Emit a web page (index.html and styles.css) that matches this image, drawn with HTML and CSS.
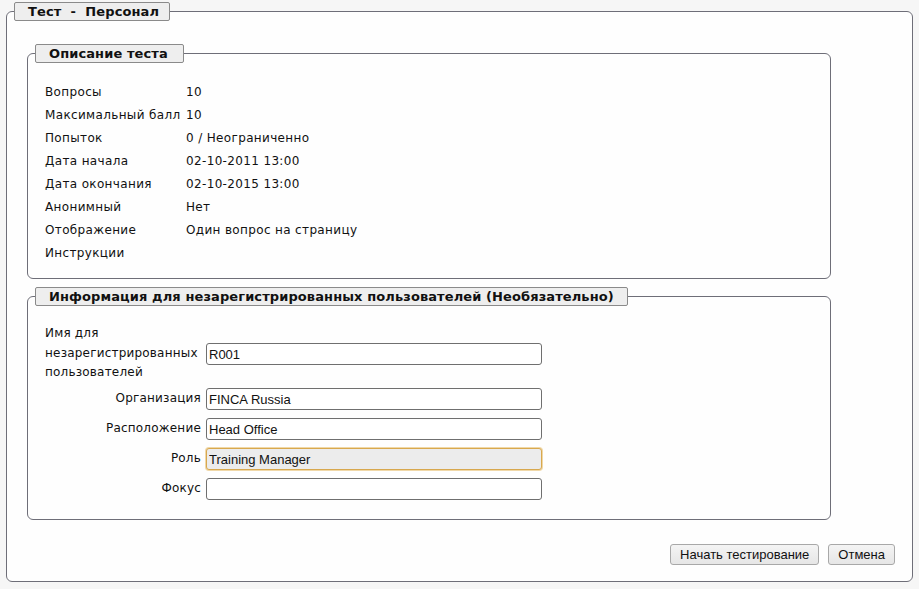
FILE: index.html
```html
<!DOCTYPE html>
<html lang="ru">
<head>
<meta charset="utf-8">
<title>Тест - Персонал</title>
<link rel="stylesheet" href="styles.css">
</head>
<body>
<fieldset class="outer">
  <legend class="legend legend-outer">Тест&nbsp; -&nbsp; Персонал</legend>
  <fieldset class="inner desc">
    <legend class="legend legend-inner">Описание теста</legend>
    <table class="info">
      <tr><td class="k">Вопросы</td><td>10</td></tr>
      <tr><td class="k">Максимальный балл</td><td>10</td></tr>
      <tr><td class="k">Попыток</td><td>0 / Неограниченно</td></tr>
      <tr><td class="k">Дата начала</td><td>02-10-2011 13:00</td></tr>
      <tr><td class="k">Дата окончания</td><td>02-10-2015 13:00</td></tr>
      <tr><td class="k">Анонимный</td><td>Нет</td></tr>
      <tr><td class="k">Отображение</td><td>Один вопрос на страницу</td></tr>
      <tr><td class="k">Инструкции</td><td></td></tr>
    </table>
  </fieldset>
  <fieldset class="inner anon">
    <legend class="legend legend-inner">Информация для незарегистрированных пользователей (Необязательно)</legend>
    <table class="form">
      <tr class="tall"><td class="lbl lbl-left">Имя для<br>незарегистрированных<br>пользователей</td><td><input class="field" type="text" value="R001"></td></tr>
      <tr><td class="lbl">Организация</td><td><input class="field" type="text" value="FINCA Russia"></td></tr>
      <tr><td class="lbl">Расположение</td><td><input class="field" type="text" value="Head Office"></td></tr>
      <tr><td class="lbl">Роль</td><td><input class="field active" type="text" value="Training Manager"></td></tr>
      <tr><td class="lbl">Фокус</td><td><input class="field" type="text" value=""></td></tr>
    </table>
  </fieldset>
  <div class="actions">
    <button class="btn" type="button">Начать тестирование</button>
    <button class="btn" type="button">Отмена</button>
  </div>
</fieldset>
</body>
</html>
```
FILE: styles.css
```css
html, body {
  margin: 0;
  padding: 0;
  background: #f6f6f6;
}
body {
  font-family: "DejaVu Sans", Verdana, sans-serif;
  font-size: 12px;
  letter-spacing: 0.35px;
  color: #111;
}
.outer {
  margin: 2px 0 0 6px;
  width: 907px;
  height: 580px;
  box-sizing: border-box;
  border: 1px solid #6e6e78;
  border-radius: 6px;
  background: #fefefe;
  padding: 0 17px 0 20px;
  display: flex;
  flex-direction: column;
}
.legend {
  background: #eeeeee;
  border: 1px solid #8a8a8a;
  border-radius: 2px;
  font-weight: bold;
  font-size: 13px;
  letter-spacing: 0.1px;
  height: 19px;
  line-height: 17px;
  box-sizing: border-box;
  padding: 0 13px 0 13px;
}
.legend-outer {
  margin-left: -13px;
  padding-right: 10px;
}
.legend-inner {
  margin-left: -10px;
}
.inner {
  width: 804px;
  box-sizing: border-box;
  border: 1px solid #6e6e78;
  border-radius: 6px;
  margin: 0;
  padding: 0 17px 0 17px;
}
.desc {
  margin-top: 23px;
  height: 235px;
}
.desc .legend-inner {
  padding-right: 15px;
}
.anon {
  margin-top: 8px;
  height: 233px;
}
.info {
  border-collapse: collapse;
  margin-top: 17px;
}
.info td {
  padding: 0;
  height: 23px;
  white-space: nowrap;
}
.info td.k {
  width: 141px;
}
.form {
  border-collapse: collapse;
  margin-top: 17px;
}
.form td {
  padding: 0;
  height: 30px;
}
.form tr.tall td {
  height: 61px;
}
.form td.lbl {
  text-align: right;
  line-height: 19.5px;
  width: 156px;
  padding-right: 5px;
  vertical-align: middle;
  letter-spacing: 0.2px;
}
.form td.lbl-left {
  text-align: left;
}
.field {
  display: block;
  width: 336px;
  height: 22px;
  box-sizing: border-box;
  border: 1px solid #6f6f6f;
  border-radius: 3px;
  background: #fff;
  font-family: "Liberation Sans", Arial, sans-serif;
  font-size: 13px;
  letter-spacing: 0;
  color: #111;
  padding: 1px 2px 0;
  margin: 0;
}
.field.active {
  background: #ececec;
  border-color: #d8a84e;
  box-shadow: 0 0 0 1px #f0d8a8;
}
.actions {
  margin-top: auto;
  margin-bottom: 16px;
  display: flex;
  justify-content: flex-end;
  gap: 9px;
}
.btn {
  font-family: "Liberation Sans", Arial, sans-serif;
  font-size: 13px;
  letter-spacing: 0;
  color: #111;
  height: 21px;
  padding: 0 9px;
  border: 1px solid #a8a8a8;
  border-radius: 3px;
  background: linear-gradient(#f4f4f4, #e6e6e6);
}
```
